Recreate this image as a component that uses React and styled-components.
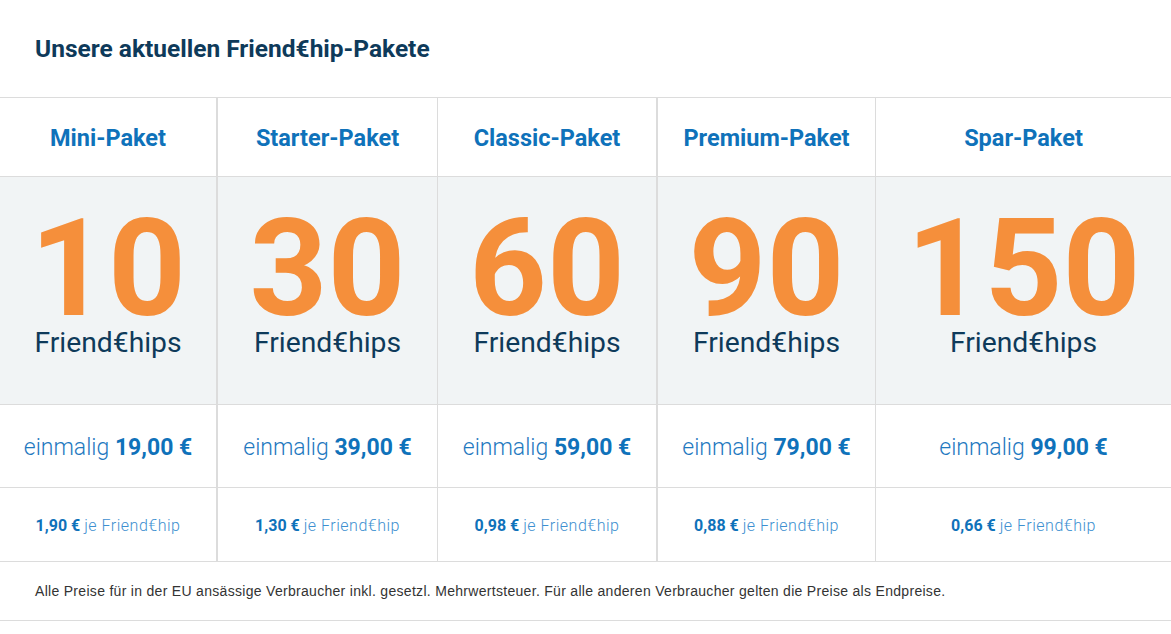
import styled, { createGlobalStyle } from 'styled-components';

const GlobalStyle = createGlobalStyle`
  html, body {
    margin: 0;
    padding: 0;
    background: #fff;
  }

  body {
    font-family: Roboto, "Noto Sans", sans-serif;
    color: #0e3a5a;
  }
`;

const packages = [
  { name: 'Mini-Paket', count: 10, price: '19,00 €', unit: '1,90 €' },
  { name: 'Starter-Paket', count: 30, price: '39,00 €', unit: '1,30 €' },
  { name: 'Classic-Paket', count: 60, price: '59,00 €', unit: '0,98 €' },
  { name: 'Premium-Paket', count: 90, price: '79,00 €', unit: '0,88 €' },
  { name: 'Spar-Paket', count: 150, price: '99,00 €', unit: '0,66 €' },
];

// column widths and the border drawn right of each column
const columns = [
  { width: '218px', border: 2 },
  { width: '220px', border: 1 },
  { width: '220px', border: 2 },
  { width: '218px', border: 1 },
  { width: '1fr', border: 0 },
];

const Wrapper = styled.section`
  width: 1171px;
`;

const TitleBar = styled.div`
  display: flex;
  align-items: center;
  height: 97px;
  padding: 0 35px;
  box-sizing: border-box;
`;

const Title = styled.h2`
  margin: 0;
  font-size: 24.5px;
  font-weight: 700;
  color: #0e3a5a;
`;

const Table = styled.div`
  display: grid;
  grid-template-columns: ${columns.map((c) => c.width).join(' ')};
  border-top: 1px solid #dcdcdc;
`;

const Cell = styled.div`
  display: flex;
  flex-direction: column;
  align-items: center;
  justify-content: center;
  box-sizing: border-box;
  height: ${(p) => p.$height}px;
  border-right: ${(p) => p.$border}px solid #dcdcdc;
  border-bottom: 1px solid #dcdcdc;
  background: ${(p) => (p.$shaded ? '#f1f4f5' : '#fff')};
`;

const PackageName = styled.div`
  font-size: 23.5px;
  font-weight: 700;
  color: #0f72ba;
  padding-top: 2px;
`;

const BandInner = styled.div`
  display: flex;
  flex-direction: column;
  align-items: center;
  padding-top: 32px;
  height: 100%;
  box-sizing: border-box;
`;

const Count = styled.div`
  font-size: 136px;
  line-height: 120px;
  font-weight: 700;
  color: #f58f3b;
`;

const CountLabel = styled.div`
  font-size: 28.3px;
  line-height: 28px;
  font-weight: 400;
  color: #0e3a5a;
`;

const Price = styled.div`
  font-size: 23px;
  font-weight: 300;
  color: #1f79bf;
  padding-top: 2px;

  strong {
    font-weight: 700;
    color: #0f72ba;
  }
`;

const UnitPrice = styled.div`
  font-size: 16px;
  font-weight: 700;
  color: #0f72ba;
  padding-top: 2px;

  span {
    font-weight: 300;
    color: #3d8fd0;
    letter-spacing: 0.5px;
  }
`;

const Note = styled.p`
  margin: 0;
  display: flex;
  align-items: center;
  height: 58px;
  padding: 0 35px;
  font-family: "Liberation Sans", Arial, sans-serif;
  font-size: 14px;
  letter-spacing: 0.3px;
  color: #333;
  border-bottom: 1px solid #dcdcdc;
`;

const App = () => {
  return (
    <Wrapper>
      <GlobalStyle />
      <TitleBar>
        <Title>Unsere aktuellen Friend€hip-Pakete</Title>
      </TitleBar>
      <Table>
        {packages.map((p, i) => (
          <Cell key={`n${i}`} $height={79} $border={columns[i].border}>
            <PackageName>{p.name}</PackageName>
          </Cell>
        ))}
        {packages.map((p, i) => (
          <Cell key={`c${i}`} $height={228} $border={columns[i].border} $shaded>
            <BandInner>
              <Count>{p.count}</Count>
              <CountLabel>Friend€hips</CountLabel>
            </BandInner>
          </Cell>
        ))}
        {packages.map((p, i) => (
          <Cell key={`p${i}`} $height={83} $border={columns[i].border}>
            <Price>
              einmalig <strong>{p.price}</strong>
            </Price>
          </Cell>
        ))}
        {packages.map((p, i) => (
          <Cell key={`u${i}`} $height={74} $border={columns[i].border}>
            <UnitPrice>
              {p.unit} <span>je Friend€hip</span>
            </UnitPrice>
          </Cell>
        ))}
      </Table>
      <Note>
        Alle Preise für in der EU ansässige Verbraucher inkl. gesetzl. Mehrwertsteuer. Für alle
        anderen Verbraucher gelten die Preise als Endpreise.
      </Note>
    </Wrapper>
  );
};

export default App;
